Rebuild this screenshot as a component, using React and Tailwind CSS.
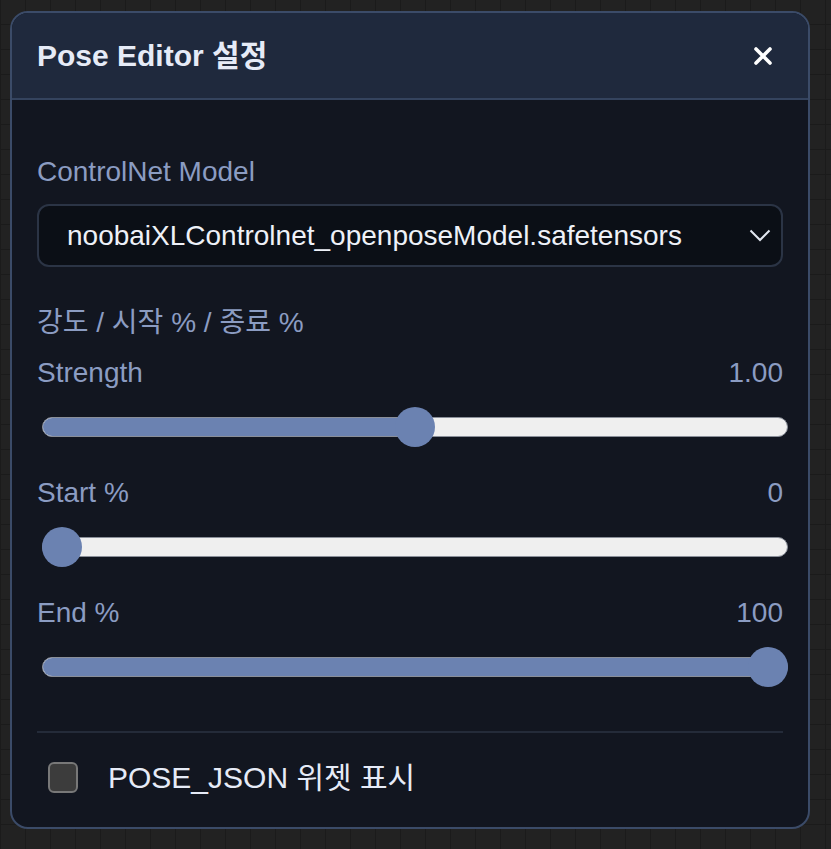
import { useState } from 'react';

const sliders = [
    { key: 'strength', label: 'Strength', value: 1, min: 0, max: 2, shown: '1.00' },
    { key: 'start', label: 'Start %', value: 0, min: 0, max: 100, shown: '0' },
    { key: 'end', label: 'End %', value: 100, min: 0, max: 100, shown: '100' },
];

function Slider({ label, value, min, max, shown }) {
    const pct = (value - min) / (max - min);
    return (
        <div className="flex flex-col">
            <div className="flex justify-between text-[28px] leading-none text-[#8b9cc2]">
                <span>{label}</span>
                <span>{shown}</span>
            </div>
            {/* track + thumb */}
            <div className="relative mt-[20px] ml-[5px] mr-[-5px] h-[40px] flex items-center">
                <div className="h-[20px] w-full rounded-full border border-[#8a8f99] bg-[#efefef] overflow-hidden">
                    <div className="h-full bg-[#6b82b1]" style={{ width: `calc(20px + (100% - 40px) * ${pct})` }} />
                </div>
                <div
                    className="absolute top-0 h-[40px] w-[40px] rounded-full bg-[#6b82b1]"
                    style={{ left: `calc((100% - 40px) * ${pct})` }}
                />
            </div>
        </div>
    );
}

export default function App() {
    const [checked, setChecked] = useState(false);

    return (
        <div className="h-[849px] w-full bg-[#222222] bg-[image:linear-gradient(#1b1b1b_1px,transparent_1px),linear-gradient(90deg,#1b1b1b_1px,transparent_1px)] bg-[size:25px_25px] bg-[position:0_-1px] pt-[11px] pl-[10px] font-['Liberation_Sans','Noto_Sans_CJK_KR',sans-serif]">
            <div className="w-[800px] h-[818px] rounded-[18px] border-2 border-[#3b4b68] bg-[#121620] overflow-hidden flex flex-col">
                {/* Header */}
                <div className="h-[87px] shrink-0 flex items-center justify-between pl-[25px] pr-[36px] bg-[#1f293d] border-b-2 border-[#34435e]">
                    <h2 className="text-[30px] font-bold text-[#e6ebf7] leading-none">Pose Editor 설정</h2>
                    <svg width="18" height="18" viewBox="0 0 18 18" className="text-white">
                        <path d="M2 2 L16 16 M16 2 L2 16" stroke="currentColor" strokeWidth="3.6" strokeLinecap="round" />
                    </svg>
                </div>

                {/* Body */}
                <div className="flex flex-col px-[25px] pt-[58px]">
                    <label className="text-[28px] leading-none text-[#8b9cc2]">ControlNet Model</label>
                    <div className="mt-[18px] h-[63px] rounded-[12px] border-2 border-[#2b3445] bg-[#0b0f16] flex items-center justify-between pl-[28px] pr-[10px]">
                        <span className="text-[28px] leading-none text-[#eef1f8]">noobaiXLControlnet_openposeModel.safetensors</span>
                        <svg width="22" height="13" viewBox="0 0 22 13" className="text-[#e2e7f0]">
                            <path d="M1.5 1.5 L11 11 L20.5 1.5" fill="none" stroke="currentColor" strokeWidth="2" />
                        </svg>
                    </div>

                    <div className="mt-[42px] text-[28px] leading-none text-[#8b9cc2]">강도 / 시작 % / 종료 %</div>

                    <div className="mt-[22px] flex flex-col gap-[32px]">
                        {sliders.map((s) => (
                            <Slider key={s.key} {...s} />
                        ))}
                    </div>

                    <div className="mt-[44px] h-[2px] bg-[#242b39]" />

                    <label className="mt-[29px] flex items-center gap-[30px] pl-[11px] cursor-pointer select-none">
                        <span
                            onClick={() => setChecked(!checked)}
                            className="h-[31px] w-[30px] rounded-[6px] border-2 border-[#787878] bg-[#3c3c3c]"
                        />
                        <span className="text-[30px] leading-none text-[#e6ebf7]">POSE_JSON 위젯 표시</span>
                    </label>
                </div>
            </div>
        </div>
    );
}
